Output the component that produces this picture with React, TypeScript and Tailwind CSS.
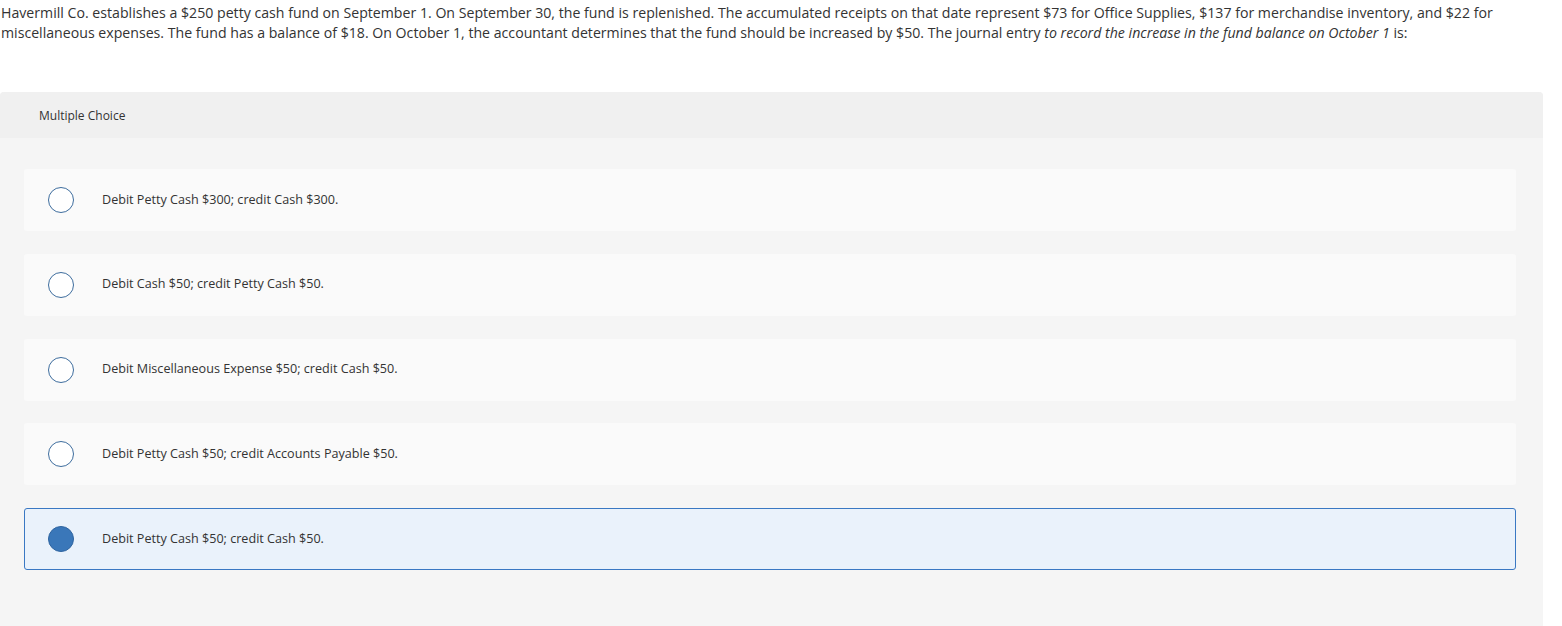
import React from "react";

const options = [
  "Debit Petty Cash $300; credit Cash $300.",
  "Debit Cash $50; credit Petty Cash $50.",
  "Debit Miscellaneous Expense $50; credit Cash $50.",
  "Debit Petty Cash $50; credit Accounts Payable $50.",
  "Debit Petty Cash $50; credit Cash $50.",
];

export default function App() {
  const selected = 4;
  return (
    <div className="w-[1562px] h-[626px] bg-white overflow-hidden" style={{ fontFamily: '"Open Sans", "Liberation Sans", sans-serif' }}>
      <div className="w-[1543px]">
        <p className="pl-[1px] pt-[3px] text-[14.15px] leading-[20px] text-[#333]">
          <span className="whitespace-nowrap">Havermill Co. establishes a $250 petty cash fund on September 1. On September 30, the fund is replenished. The accumulated receipts on that date represent $73 for Office Supplies, $137 for merchandise inventory, and $22 for</span>
          <br />
          <span className="whitespace-nowrap">miscellaneous expenses. The fund has a balance of $18. On October 1, the accountant determines that the fund should be increased by $50. The journal entry <i>to record the increase in the fund balance on October 1</i> is:</span>
        </p>
        <div className="mt-[49px] rounded-t-[4px] bg-[#f5f5f5] h-[600px]">
          <div className="h-[46px] bg-[#f0f0f0] rounded-t-[4px] flex items-center pl-[39px] pt-[2px] text-[12px] text-[#333]">
            Multiple Choice
          </div>
          <div className="pt-[31px] pl-[24px] pr-[27px] flex flex-col gap-[22.75px]">
            {options.map((o, i) => {
              const sel = i === selected;
              return (
                <div
                  key={i}
                  className={
                    sel
                      ? "h-[62px] rounded-[3px] border border-[#3a78c3] bg-[#eaf2fb] flex items-center pl-[23px]"
                      : "h-[62px] rounded-[3px] border border-transparent bg-[#fafafa] flex items-center pl-[23px]"
                  }
                >
                  {sel ? (
                    <span className="w-[26px] h-[26px] rounded-full bg-[#3a77b9] border border-[#2e64a0]" />
                  ) : (
                    <span className="w-[26px] h-[26px] rounded-full border-[1.5px] border-[#3e6d9e] bg-white" />
                  )}
                  <span className="ml-[28px] text-[12.6px] text-[#333]">{o}</span>
                </div>
              );
            })}
          </div>
        </div>
      </div>
    </div>
  );
}
